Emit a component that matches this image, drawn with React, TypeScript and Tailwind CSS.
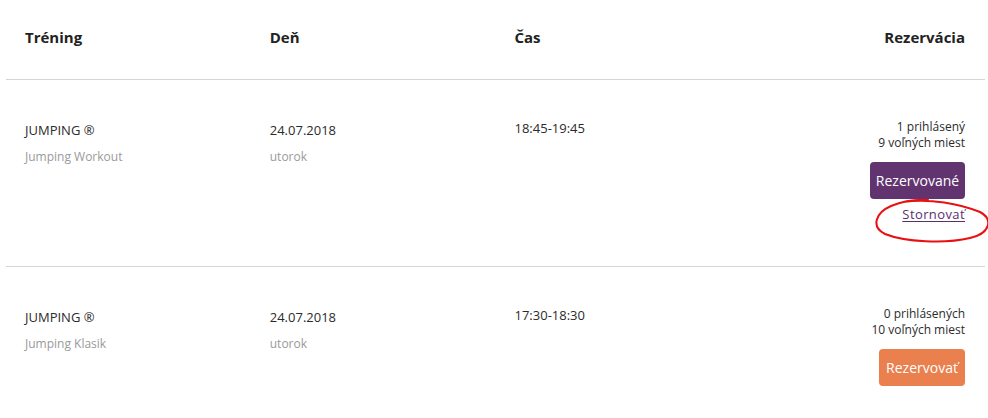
import React from 'react';

interface Session {
    title: string;
    subtitle: string;
    date: string;
    day: string;
    time: string;
    signed: string;
    free: string;
    reserved: boolean;
}

const sessions: Session[] = [
    {
        title: 'JUMPING ®',
        subtitle: 'Jumping Workout',
        date: '24.07.2018',
        day: 'utorok',
        time: '18:45-19:45',
        signed: '1 prihlásený',
        free: '9 voľných miest',
        reserved: true,
    },
    {
        title: 'JUMPING ®',
        subtitle: 'Jumping Klasik',
        date: '24.07.2018',
        day: 'utorok',
        time: '17:30-18:30',
        signed: '0 prihlásených',
        free: '10 voľných miest',
        reserved: false,
    },
];

const App: React.FC = () => {
    return (
        <div className="relative min-h-screen bg-white text-[#2b2b2b] font-['Open_Sans','Liberation_Sans',sans-serif]">
            <div className="ml-[6px] mr-[3px]">
                {/* header */}
                <div className="grid grid-cols-4 h-[80px] border-b border-[#d4d4d4] pt-[28px] text-[15px] font-bold leading-[18px] text-[#222]">
                    <div className="px-[19px]">Tréning</div>
                    <div className="px-[19px]">Deň</div>
                    <div className="px-[19px]">Čas</div>
                    <div className="px-[20px] text-right">Rezervácia</div>
                </div>

                {sessions.map((s, i) => (
                    <div
                        key={i}
                        className={`grid grid-cols-4 pt-[39px] ${i === 0 ? 'h-[187px] border-b border-[#d4d4d4]' : ''}`}
                    >
                        <div className="px-[19px] pt-[3px]">
                            <div className="text-[13px] leading-[16px]">{s.title}</div>
                            <div className="mt-[11px] text-[12px] leading-[16px] text-[#9a9a9a]">{s.subtitle}</div>
                        </div>
                        <div className="px-[19px] pt-[3px]">
                            <div className="text-[13px] leading-[16px]">{s.date}</div>
                            <div className="mt-[11px] text-[12px] leading-[16px] text-[#9a9a9a]">{s.day}</div>
                        </div>
                        <div className="px-[19px] pt-[1px]">
                            <div className="text-[13px] leading-[16px]">{s.time}</div>
                        </div>
                        <div className="px-[20px] flex flex-col items-end text-[12px] leading-[16px]">
                            <div>{s.signed}</div>
                            <div>{s.free}</div>
                            {s.reserved ? (
                                <>
                                    <button className="mt-[11px] h-[37px] w-[95px] rounded-[4px] bg-[#61346f] text-[14px] text-white">
                                        Rezervované
                                    </button>
                                    <a className="mt-[7px] text-[13px] tracking-[0.4px] text-[#5b2f6c] underline underline-offset-2">
                                        Stornovať
                                    </a>
                                </>
                            ) : (
                                <button className="mt-[11px] h-[37px] w-[86px] rounded-[4px] bg-[#e9804e] text-[14px] text-white">
                                    Rezervovať
                                </button>
                            )}
                        </div>
                    </div>
                ))}
            </div>

            {/* red hand-drawn annotation */}
            <svg className="absolute left-0 top-0 pointer-events-none" width="988" height="418">
                <path
                    d="M 903 202 C 930 198, 960 204, 980 212 C 993 219, 991 233, 970 238 C 945 244, 905 242, 885 234 C 871 227, 875 213, 891 206 C 901 202, 915 199, 928 200"
                    fill="none"
                    stroke="#e81010"
                    strokeWidth="2"
                    strokeLinecap="round"
                />
            </svg>
        </div>
    );
};

export default App;
